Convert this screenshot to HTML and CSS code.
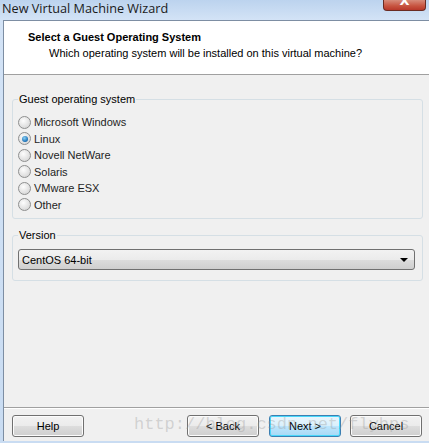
FILE: index.html
```html
<!DOCTYPE html>
<html lang="en">
<head>
    <meta charset="UTF-8">
    <meta name="viewport" content="width=device-width, initial-scale=1.0">
    <title>New Virtual Machine Wizard</title>
    <link rel="stylesheet" href="styles.css">
</head>
<body>
    <div class="frame">
        <div class="titlebar">
            <span class="title">New Virtual Machine Wizard</span>
            <span class="close"><span class="x">X</span></span>
        </div>

        <div class="client">
            <div class="header">
                <p class="heading">Select a Guest Operating System</p>
                <p class="subheading">Which operating system will be installed on this virtual machine?</p>
            </div>

            <div class="content">
                <fieldset class="group os">
                    <legend>Guest operating system</legend>
                    <label class="radio"><span class="dot"></span>Microsoft Windows</label>
                    <label class="radio checked"><span class="dot"></span>Linux</label>
                    <label class="radio"><span class="dot"></span>Novell NetWare</label>
                    <label class="radio"><span class="dot"></span>Solaris</label>
                    <label class="radio"><span class="dot"></span>VMware ESX</label>
                    <label class="radio"><span class="dot"></span>Other</label>
                </fieldset>

                <fieldset class="group version">
                    <legend>Version</legend>
                    <div class="select">
                        <span>CentOS 64-bit</span>
                        <span class="arrow"></span>
                    </div>
                </fieldset>
            </div>

            <div class="footer">
                <button class="btn">Help</button>
                <div class="spacer"></div>
                <button class="btn">&lt; Back</button>
                <button class="btn default">Next &gt;</button>
                <button class="btn cancel">Cancel</button>
                <span class="watermark">http://blog.csdn.net/flyhps</span>
            </div>
        </div>
    </div>
</body>
</html>
```

FILE: styles.css
```css
* {
    box-sizing: border-box;
}
body {
    margin: 0;
    width: 429px;
    height: 443px;
    overflow: hidden;
    font-family: Tahoma, "Liberation Sans", Arial, sans-serif;
    font-size: 11px;
    color: #000;
    background-color: #c9dcf2;
}
.frame {
    height: 443px;
    display: flex;
    flex-direction: column;
    padding: 0 0 2px 3px;
    background: linear-gradient(#bcd3ee, #d3e3f6 20px, #c9dcf2);
}
.titlebar {
    height: 20px;
    display: flex;
    justify-content: space-between;
    align-items: flex-start;
}
.title {
    font-family: "Open Sans", "Liberation Sans", sans-serif;
    font-size: 12.7px;
    line-height: 17px;
    color: #1a1a1a;
    margin-left: -1px;
}
.close {
    width: 43px;
    height: 11px;
    margin-right: 3px;
    overflow: hidden;
    border: 1px solid #6a2b22;
    border-top: none;
    border-radius: 0 0 4px 4px;
    background: linear-gradient(#d78b7a, #c7533f 60%, #b8382a);
    display: flex;
    justify-content: center;
}
.close .x {
    font-family: "DejaVu Sans", sans-serif;
    font-weight: bold;
    font-size: 13px;
    line-height: 1;
    margin-top: -6px;
    color: #fff;
}
.client {
    flex: 1;
    display: flex;
    flex-direction: column;
    background-color: #f0f0f0;
    border-left: 1px solid #7d8ea3;
    border-top: 1px solid #7d8ea3;
}
.header {
    height: 54px;
    background-color: #fff;
    border-bottom: 1px solid #a0a0a0;
    padding: 10px 0 0 24px;
}
.heading {
    margin: 0;
    font-weight: bold;
    line-height: 13px;
}
.subheading {
    margin: 3px 0 0 21px;
    line-height: 13px;
}
.content {
    flex: 1;
    padding: 18px 6px 0 8px;
}
.group {
    margin: 0;
    padding: 0 7px 0 5px;
    border: 1px solid #d5dfe5;
    border-radius: 3px;
}
.group legend {
    padding: 0 1px;
    line-height: 13px;
    color: #000;
}
.os {
    padding-top: 8px;
    padding-bottom: 5px;
}
.radio {
    display: flex;
    align-items: center;
    height: 16.5px;
    color: #1e1e1e;
}
.dot {
    width: 13px;
    height: 13px;
    margin-right: 3px;
    border-radius: 50%;
    border: 1px solid #8e8f8f;
    background: radial-gradient(circle at 40% 35%, #fdfdfd, #dcdcdc 70%, #cfcfcf);
    display: flex;
    align-items: center;
    justify-content: center;
}
.checked .dot::after {
    content: "";
    width: 6px;
    height: 6px;
    border-radius: 50%;
    background: radial-gradient(circle at 40% 35%, #8ad0f5, #1a6fb5 70%, #0d4f8a);
}
.version {
    margin-top: 10px;
    padding-top: 7px;
    padding-bottom: 10px;
}
.select {
    height: 21px;
    display: flex;
    align-items: center;
    justify-content: space-between;
    padding: 0 6px 0 3px;
    border: 1px solid #707070;
    border-radius: 3px;
    background: linear-gradient(#f2f2f2, #ebebeb 50%, #dddddd 50%, #cfcfcf);
}
.arrow {
    width: 0;
    height: 0;
    border-left: 4px solid transparent;
    border-right: 4px solid transparent;
    border-top: 4px solid #000;
}
.footer {
    position: relative;
    height: 34px;
    display: flex;
    align-items: flex-start;
    padding: 7px 7px 0 8px;
    border-top: 1px solid #a0a0a0;
    box-shadow: inset 0 1px 0 #fff;
}
.spacer {
    flex: 1;
}
.btn {
    width: 72px;
    height: 22px;
    padding: 0;
    font-family: inherit;
    font-size: 11px;
    color: #000;
    border: 1px solid #707070;
    border-radius: 3px;
    background: linear-gradient(#f2f2f2, #ebebeb 50%, #dddddd 50%, #cfcfcf);
    box-shadow: inset 0 0 0 1px #fcfcfc;
}
.btn + .btn {
    margin-left: 10px;
}
.btn.cancel {
    margin-left: 9px;
}
.btn.default {
    border-color: #3c7fb1;
    background: linear-gradient(#eaf6fd, #d9f0fc 50%, #bee6fd 50%, #a7d9f5);
    box-shadow: inset 0 0 0 1px #48d8fb;
}
.watermark {
    position: absolute;
    left: 130px;
    top: 7px;
    font-family: "Liberation Mono", monospace;
    font-size: 17px;
    line-height: 20px;
    color: rgba(150, 150, 150, 0.35);
    pointer-events: none;
    white-space: nowrap;
}
```
